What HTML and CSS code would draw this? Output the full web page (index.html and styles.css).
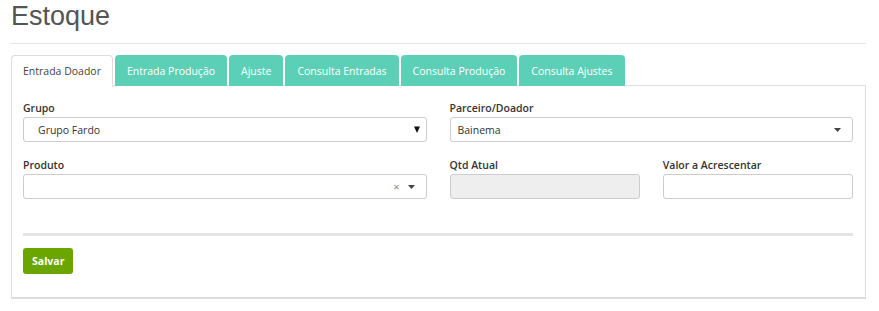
FILE: index.html
```html
<!DOCTYPE html>
<html>
<head>
<meta charset="utf-8">
<link rel="stylesheet" href="styles.css">
</head>
<body>
<div class="page">
  <h1 class="title">Estoque</h1>
  <hr class="rule">
  <ul class="tabs">
    <li class="tab active">Entrada Doador</li>
    <li class="tab">Entrada Produção</li>
    <li class="tab">Ajuste</li>
    <li class="tab">Consulta Entradas</li>
    <li class="tab">Consulta Produção</li>
    <li class="tab">Consulta Ajustes</li>
  </ul>
  <div class="panel">
    <div class="grid">
      <div class="field">
        <label>Grupo</label>
        <div class="control select native">
          <span class="val indent">Grupo Fardo</span>
          <svg class="caret-big" width="6" height="7" viewBox="0 0 6 7"><path d="M0 0.5H6L3 7Z" fill="#111"/></svg>
        </div>
      </div>
      <div class="field">
        <label>Parceiro/Doador</label>
        <div class="control select">
          <span class="val">Bainema</span>
          <svg class="caret" width="7" height="4" viewBox="0 0 7 4"><path d="M0 0H7L3.5 4Z" fill="#444"/></svg>
        </div>
      </div>
      <div class="field">
        <label>Produto</label>
        <div class="control select">
          <span class="val"></span>
          <span class="clear">×</span>
          <svg class="caret" width="7" height="4" viewBox="0 0 7 4"><path d="M0 0H7L3.5 4Z" fill="#444"/></svg>
        </div>
      </div>
      <div class="subgrid">
        <div class="field">
          <label>Qtd Atual</label>
          <div class="control disabled"></div>
        </div>
        <div class="field">
          <label>Valor a Acrescentar</label>
          <div class="control"></div>
        </div>
      </div>
    </div>
    <div class="divider"></div>
    <button class="btn">Salvar</button>
  </div>
</div>
</body>
</html>
```
FILE: styles.css
```css
* { box-sizing: border-box; }
body {
  margin: 0;
  background: #fff;
  font-family: "Open Sans", "Liberation Sans", sans-serif;
  font-size: 10.5px;
  color: #333;
}
.page {
  padding: 0 13px 0 11px;
}
.title {
  margin: 0;
  padding-top: 1px;
  font-family: "Liberation Sans", Arial, sans-serif;
  font-weight: normal;
  font-size: 27px;
  line-height: 31px;
  color: #555;
}
.rule {
  margin: 11px 0 11px 0;
  border: 0;
  border-top: 1px solid #e5e5e5;
  height: 0;
}
.tabs {
  list-style: none;
  margin: 0;
  padding: 0;
  display: flex;
  height: 31px;
}
.tab {
  height: 31px;
  padding: 0 12px;
  margin-right: 2px;
  line-height: 32px;
  background: #5ccfb7;
  color: #fff;
  border-radius: 4px 4px 0 0;
  white-space: nowrap;
}
.tab.active {
  background: #fff;
  color: #444;
  border: 1px solid #ddd;
  border-bottom: 0;
  line-height: 30px;
  padding: 0 11px;
  position: relative;
  z-index: 1;
  height: 32px;
}
.panel {
  border: 1px solid #ddd;
  border-bottom: 2px solid #ddd;
  padding: 14px 12px 23px 11px;
  margin-top: -1px;
}
.grid {
  display: grid;
  grid-template-columns: 1fr 1fr;
  column-gap: 23px;
  row-gap: 15px;
}
.subgrid {
  display: grid;
  grid-template-columns: 1fr 1fr;
  column-gap: 23px;
}
.field label {
  display: block;
  font-weight: 600;
  line-height: 16px;
  margin-bottom: 1px;
  color: #333;
}
.control {
  height: 25px;
  border: 1px solid #ccc;
  border-radius: 3px;
  background: #fff;
  display: flex;
  align-items: center;
  padding: 0 11px 0 7px;
}
.control.native { padding-right: 6px; }
.control.disabled { background: #eee; }
.val { flex: 1; color: #333; }
.val.indent { padding-left: 7px; }
.clear { color: #888; font-size: 11px; margin-right: 8px; }
.divider {
  height: 3px;
  background: #e5e5e5;
  margin: 34px 0 12px;
}
.btn {
  height: 26px;
  padding: 0 9px;
  background: #6aa500;
  color: #fff;
  font-family: "Open Sans", sans-serif;
  font-weight: 700;
  font-size: 10.5px;
  border: 0;
  border-radius: 3px;
  display: block;
}
```
